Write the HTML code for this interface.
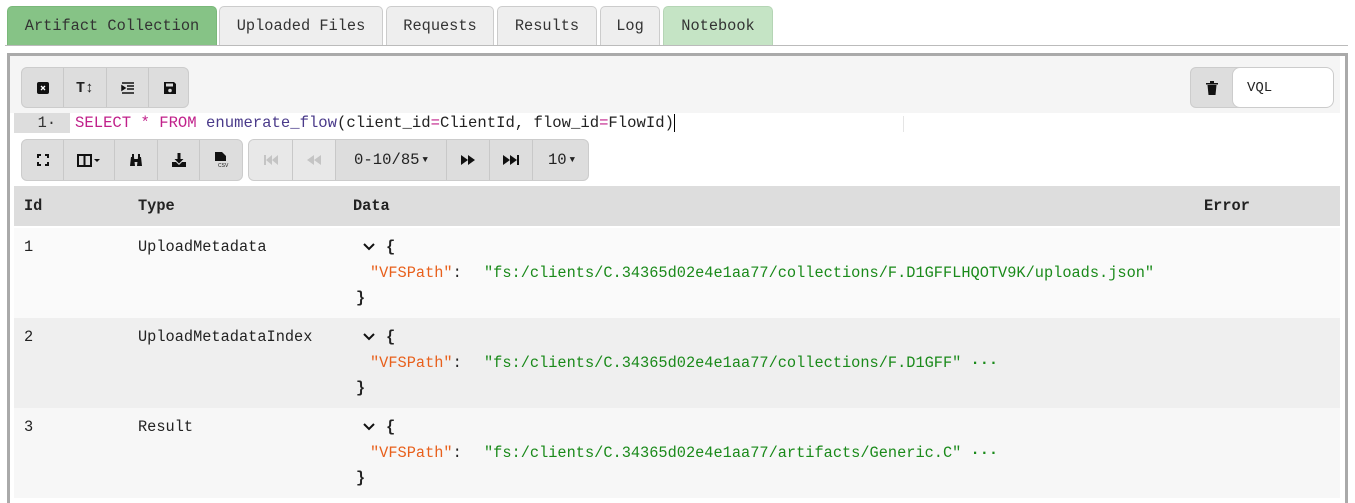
<!DOCTYPE html>
<html style="overflow:hidden;height:503px"><head><meta charset="utf-8"><style>
*{box-sizing:border-box;margin:0;padding:0}
body{width:1355px;height:503px;overflow:hidden;background:#fff;font-family:"Liberation Mono",monospace;font-size:15.3px;color:#222;position:relative}
.a{position:absolute}
.tab{position:absolute;top:6px;height:40px;border:1px solid #ccc;border-bottom:none;border-radius:5px 5px 0 0;background:#eee;text-align:center;line-height:39px;color:#333}
.btn{position:absolute;height:40px;display:flex;align-items:center;justify-content:center;border-right:1px solid #c8c8c8}
.grp{position:absolute;background:#ddd;border:1px solid #ccc;border-radius:6px;overflow:hidden}
.row{position:absolute;left:14px;width:1326px;height:90px}
.c{position:absolute;white-space:pre}
.k{color:#e8601c}.s{color:#1a8a1a}
</style></head><body>
<div class="tab" style="left:7px;width:210px;background:#86c386;border-color:#7ab87a">Artifact Collection</div>
<div class="tab" style="left:219px;width:164px">Uploaded Files</div>
<div class="tab" style="left:386px;width:108px">Requests</div>
<div class="tab" style="left:497px;width:100px">Results</div>
<div class="tab" style="left:600px;width:60px">Log</div>
<div class="tab" style="left:663px;width:110px;background:#c5e4c5;border-color:#b5d5b5">Notebook</div>
<div class="a" style="left:5px;top:45px;width:1343px;height:1px;background:#bbb"></div>

<div class="a" style="left:7px;top:53px;width:1341px;height:450px;border:3px solid #aaa;border-bottom:none;background:#fff"></div>
<div class="a" style="left:10px;top:56px;width:1330px;height:57px;background:#f5f5f5"></div>

<div class="grp" style="left:21px;top:67px;width:168px;height:41px">
 <div class="btn" style="left:0;width:42px"><svg width="14" height="14"><rect x="1" y="1" width="12" height="12" rx="2" fill="#111"/><path d="M5 5l4 4M9 5l-4 4" stroke="#fff" stroke-width="1.3"/></svg></div>
 <div class="btn" style="left:42px;width:43px;font-weight:bold;font-size:15px">T&#8597;</div>
 <div class="btn" style="left:85px;width:42px"><svg width="14" height="14"><path d="M1 2h12M6 5h7M6 8h7M1 12h12M1 5l3 2-3 2z" stroke="#111" stroke-width="1.5" fill="#111"/></svg></div>
 <div class="btn" style="left:127px;width:41px;border:none"><svg width="14" height="14"><path d="M1 1h10l2 2v10H1z" fill="#111"/><rect x="3" y="2.5" width="7" height="3" fill="#ddd"/><circle cx="7" cy="9.5" r="1.8" fill="#ddd"/></svg></div>
</div>
<div class="grp" style="left:1190px;top:67px;width:60px;height:41px;border-radius:6px 0 0 6px">
 <div class="btn" style="left:0;width:42px;border:none"><svg width="12" height="14"><path d="M0 2h12v1.5H0zM4 0h4v2H4zM1.5 4h9l-1 10h-7z" fill="#111"/></svg></div>
</div>
<div class="a" style="left:1232px;top:67px;width:102px;height:41px;background:#fff;border:1px solid #ccc;border-radius:8px;padding:12px 0 0 14px;font-size:14px">VQL</div>

<div class="a" style="left:14px;top:113px;width:56px;height:20px;background:#ddd;text-align:right;padding-right:14px;line-height:20px;color:#333">1·</div>
<div class="a" style="left:75px;top:113px;line-height:20px;white-space:pre;font-size:15.6px"><span style="color:#c0208a">SELECT * FROM</span> <span style="color:#4a3a8a">enumerate_flow</span>(client_id<span style="color:#c0208a">=</span>ClientId, flow_id<span style="color:#c0208a">=</span>FlowId)<span style="border-left:1.5px solid #000"></span></div>
<div class="a" style="left:903px;top:116px;width:1px;height:16px;background:#e5e5e5"></div>

<div class="grp" style="left:21px;top:139px;width:222px;height:42px">
 <div class="btn" style="left:0;width:42px"><svg width="12" height="12"><path d="M1 4V1h3M8 1h3v3M11 8v3H8M4 11H1V8" stroke="#111" stroke-width="2" fill="none"/></svg></div>
 <div class="btn" style="left:42px;width:51px"><svg width="24" height="14"><rect x="1" y="2" width="13" height="11" fill="none" stroke="#111" stroke-width="2"/><path d="M7.5 2v11" stroke="#111" stroke-width="2"/><path d="M17 6h6l-3 3z" fill="#111"/></svg></div>
 <div class="btn" style="left:93px;width:43px"><svg width="14" height="14"><path d="M1 13l1-9h3l1 9zM8 13l1-9h3l1 9zM3 1h2v3H3zM9 1h2v3H9zM5 6h4v3H5z" fill="#111"/></svg></div>
 <div class="btn" style="left:136px;width:42px"><svg width="14" height="14"><path d="M5.5 0h3v6h3L7 10.5 2.5 6h3z" fill="#111"/><path d="M0 9h4l3 3 3-3h4v5H0z" fill="#111"/></svg></div>
 <div class="btn" style="left:178px;width:44px;border:none"><svg width="14" height="16"><path d="M0 0h7l4 4v5H0z" fill="#111"/><text x="3" y="15" font-size="5" font-family="Liberation Sans" fill="#111">CSV</text></svg></div>
</div>
<div class="grp" style="left:248px;top:139px;width:341px;height:42px">
 <div class="btn" style="left:0;width:44px;background:#e8e8e8;color:#bbb"><svg width="14" height="10"><path d="M0 0h2v10H0zM2 5l6-5v10zM8 5l6-5v10z" fill="#c4c4c4"/></svg></div>
 <div class="btn" style="left:44px;width:43px;background:#e8e8e8"><svg width="14" height="10"><path d="M0 5l7-5v10zM7 5l7-5v10z" fill="#c4c4c4"/></svg></div>
 <div class="btn" style="left:87px;width:111px;font-size:15.6px">0-10/85<span style="font-size:9px;margin-left:3px">▼</span></div>
 <div class="btn" style="left:198px;width:43px"><svg width="14" height="10"><path d="M0 0l7 5-7 5zM7 0l7 5-7 5z" fill="#111"/></svg></div>
 <div class="btn" style="left:241px;width:43px"><svg width="16" height="10"><path d="M0 0l7 5-7 5zM7 0l7 5-7 5zM14 0h2v10h-2z" fill="#111"/></svg></div>
 <div class="btn" style="left:284px;width:57px;border:none;font-size:15.6px">10<span style="font-size:9px;margin-left:3px">▼</span></div>
</div>

<div class="a" style="left:14px;top:186px;width:1326px;height:40px;background:#ddd;font-weight:bold;line-height:40px">
 <span class="c" style="left:10px">Id</span><span class="c" style="left:124px">Type</span><span class="c" style="left:339px">Data</span><span class="c" style="left:1190px">Error</span>
</div>

<div class="row" style="top:228px;background:#fafafa">
 <span class="c" style="left:10px;top:10px">1</span><span class="c" style="left:124px;top:10px">UploadMetadata</span>
 <svg class="c" style="left:348px;top:14px" width="14" height="10"><path d="M2 2l5 5 5-5" stroke="#111" stroke-width="2" fill="none"/></svg>
 <b class="c" style="left:372px;top:10px">{</b>
 <span class="c" style="left:356px;top:36px"><span class="k">"VFSPath"</span>:</span>
 <span class="c s" style="left:470px;top:36px">"fs:/clients/C.34365d02e4e1aa77/collections/F.D1GFFLHQOTV9K/uploads.json"</span>
 <b class="c" style="left:342px;top:61px">}</b>
</div>
<div class="row" style="top:318px;background:#efefef">
 <span class="c" style="left:10px;top:10px">2</span><span class="c" style="left:124px;top:10px">UploadMetadataIndex</span>
 <svg class="c" style="left:348px;top:14px" width="14" height="10"><path d="M2 2l5 5 5-5" stroke="#111" stroke-width="2" fill="none"/></svg>
 <b class="c" style="left:372px;top:10px">{</b>
 <span class="c" style="left:356px;top:36px"><span class="k">"VFSPath"</span>:</span>
 <span class="c s" style="left:470px;top:36px">"fs:/clients/C.34365d02e4e1aa77/collections/F.D1GFF" <b>···</b></span>
 <b class="c" style="left:342px;top:61px">}</b>
</div>
<div class="row" style="top:408px;background:#f7f7f7">
 <span class="c" style="left:10px;top:10px">3</span><span class="c" style="left:124px;top:10px">Result</span>
 <svg class="c" style="left:348px;top:14px" width="14" height="10"><path d="M2 2l5 5 5-5" stroke="#111" stroke-width="2" fill="none"/></svg>
 <b class="c" style="left:372px;top:10px">{</b>
 <span class="c" style="left:356px;top:36px"><span class="k">"VFSPath"</span>:</span>
 <span class="c s" style="left:470px;top:36px">"fs:/clients/C.34365d02e4e1aa77/artifacts/Generic.C" <b>···</b></span>
 <b class="c" style="left:342px;top:61px">}</b>
</div>
</body></html>
